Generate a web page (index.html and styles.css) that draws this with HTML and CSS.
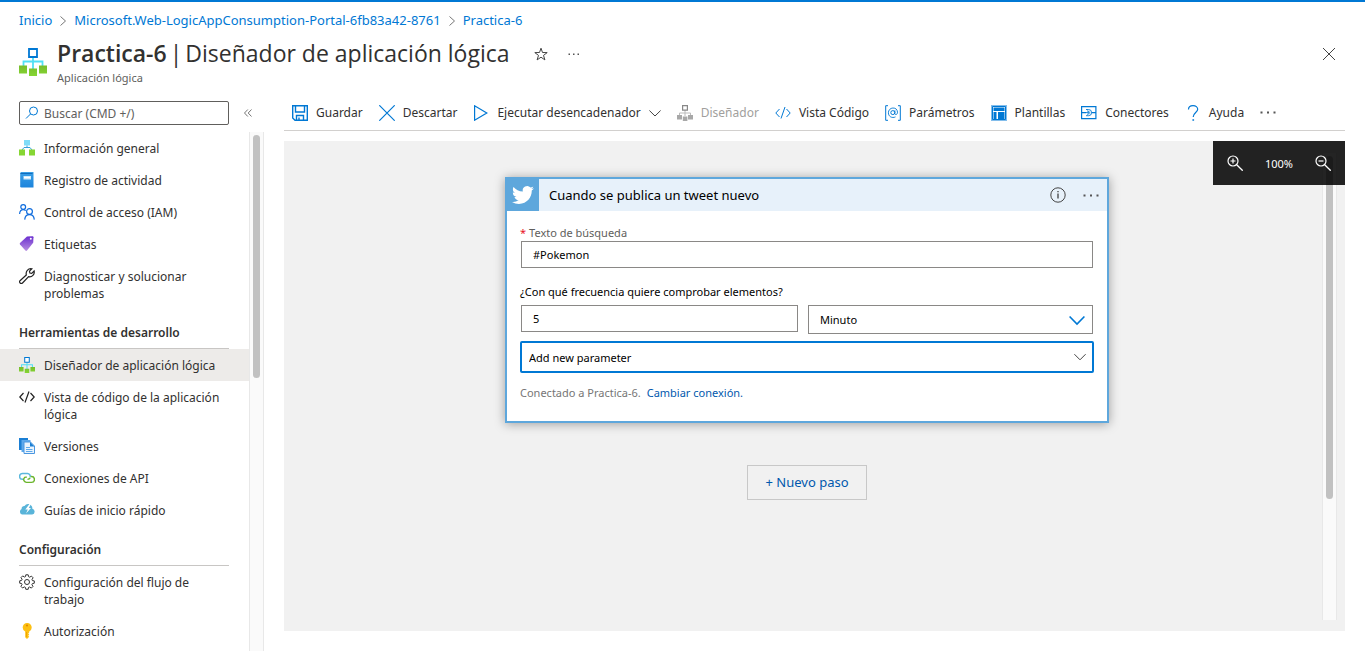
FILE: index.html
```html
<!DOCTYPE html>
<html lang="es">
<head>
<meta charset="utf-8">
<meta name="viewport" content="width=device-width, initial-scale=1">
<title>Practica-6 | Diseñador de aplicación lógica</title>
<link rel="stylesheet" href="styles.css">
</head>
<body>
<svg class="defs" aria-hidden="true">
  <defs>
    <linearGradient id="green" x1="0" y1="0" x2="0" y2="1"><stop offset="0" stop-color="#76bc2d"/><stop offset="1" stop-color="#86d633"/></linearGradient>
    <linearGradient id="blue" x1="0" y1="0" x2="0" y2="1"><stop offset="0" stop-color="#3a9fe6"/><stop offset="1" stop-color="#1c84dc"/></linearGradient>
    <linearGradient id="purple" x1="0" y1="0" x2="0" y2="1"><stop offset="0" stop-color="#6b2fd0"/><stop offset="1" stop-color="#b78ee0"/></linearGradient>
    <symbol id="logic" viewBox="0 0 28 28">
      <path d="M14 9v14M4.500 19v-5.500h19V19" fill="none" stroke="#50e0f5" stroke-width="1.800"/>
      <path d="M10 1h8v8h-8z" fill="#fff" stroke="#0078d4" stroke-width="1.800"/>
      <path d="M0 17.500h8v8H0zM10 20.500h8v7.500h-8zM20 17.500h8v8h-8z" fill="url(#green)"/>
    </symbol>
    <symbol id="zoomer" viewBox="0 0 16 16">
      <circle cx="6" cy="6" r="5" fill="none" stroke="#fff" stroke-width="1.200"/>
      <path d="M9.700 9.700l6 6" stroke="#fff" stroke-width="1.300"/>
    </symbol>
  </defs>
</svg>

<header class="top">
  <nav class="crumbs" aria-label="Ruta">
    <a href="#">Inicio</a>
    <svg class="crumb-sep" viewBox="0 0 6 10"><path d="M.5.5L5.500 5 .5 9.500"/></svg>
    <a href="#">Microsoft.Web-LogicAppConsumption-Portal-6fb83a42-8761</a>
    <svg class="crumb-sep" viewBox="0 0 6 10"><path d="M.5.5L5.500 5 .5 9.500"/></svg>
    <a href="#">Practica-6</a>
  </nav>
  <div class="title-row">
    <svg class="title-icon"><use href="#logic"/></svg>
    <div class="title-text">
      <h1><strong>Practica-6</strong> <span>|</span> <span>Diseñador de aplicación lógica</span></h1>
      <p>Aplicación lógica</p>
    </div>
    <div class="title-actions">
      <button type="button" aria-label="Favorito"><svg class="i14" viewBox="0 0 14 14"><path class="ink" d="M7 1.200l1.500 4.300 4.700.1-3.700 2.800 1.400 4.500L7 10.200l-3.900 2.700 1.400-4.500L.8 5.600l4.700-.1z"/></svg></button>
      <button type="button" aria-label="Más"><svg class="i12" viewBox="0 0 12 12"><path d="M.5 5.500h1.500v1.500H.5zM5 5.500h1.500v1.500H5zM9.500 5.500H11v1.500H9.500z" fill="#555"/></svg></button>
    </div>
    <button class="close" type="button" aria-label="Cerrar"><svg class="i12" viewBox="0 0 12 12"><path class="ink" d="M0 0l12 12M12 0L0 12"/></svg></button>
  </div>
</header>

<div class="shell">
  <aside class="side">
    <div class="search-row">
      <label class="search">
        <svg class="i14" viewBox="0 0 14 14"><circle cx="8.500" cy="5" r="4" fill="none" stroke="#0078d4"/><path d="M5.500 8L1 12.500" stroke="#0078d4"/></svg>
        <input type="text" placeholder="Buscar (CMD +/)" aria-label="Buscar">
      </label>
      <button class="collapse" type="button" aria-label="Contraer"><svg viewBox="0 0 8 8"><path d="M3.800.5L.5 4l3.300 3.500M7.500.5L4.200 4l3.300 3.500" fill="none" stroke="#666" stroke-width=".9"/></svg></button>
    </div>
    <div class="side-body">
      <nav class="menu" aria-label="Menú de recursos">
        <a href="#"><svg class="mi" viewBox="0 0 16 16"><path d="M5 0h6v5.500H5z" fill="#7fdcf8"/><path d="M8 5.500v2M3 10l2-2.500h6l2 2.500" fill="none" stroke="#32a0dc"/><path d="M0 9.500h6V15.500H0zM10 9.500h6v6h-6z" fill="#86d633"/></svg>Información general</a>
        <a href="#"><svg class="mi" viewBox="0 0 16 16"><path d="M2 0h12.500v15.500H2.500a1.300 1.300 0 01-1.300-1.300V1z" fill="url(#blue)"/><path d="M1.500 1.500h12" stroke="#0f6cbd"/><path d="M4.500 4h7.500v3.500H4.500z" fill="#d3ecfc"/><path d="M5 5.500h6" stroke="#fff"/></svg>Registro de actividad</a>
        <a href="#"><svg class="mi" viewBox="0 0 16 16" fill="none" stroke="#0f6cdd" stroke-width="1.200"><circle cx="4.200" cy="3" r="2.400"/><path d="M.6 10C.8 7 2.300 5.700 4.200 5.700c1 0 1.800.3 2.500.9"/><circle cx="10.500" cy="7.500" r="2.900"/><path d="M5.700 15.600c.3-3 2.300-4.900 4.800-4.900s4.500 1.900 4.800 4.900"/></svg>Control de acceso (IAM)</a>
        <a href="#"><svg class="mi" viewBox="0 0 16 16"><path d="M8 .5l5.500-.3q1 0 1 1l-.3 5.500L8 14.500q-.8.800-1.600 0L1 8.500q-.6-.8 0-1.600z" fill="url(#purple)"/><circle cx="11.800" cy="2.800" r="1" fill="#fff"/></svg>Etiquetas</a>
        <a href="#"><svg class="mi" viewBox="0 0 16 16"><path d="M1 12.700L7.300 7C6.500 3.500 9 .2 12.800.8L10.500 3.200l.4 1.900 1.800.3 2.400-2.400c.8 3.500-2.100 6.400-5.500 5.700L3.500 15c-.8.800-1.700.7-2.400 0s-.8-1.600-.1-2.300z" fill="none" stroke="#222" stroke-width="1.200"/></svg>Diagnosticar y solucionar problemas</a>
        <h2>Herramientas de desarrollo</h2>
        <a href="#" class="current" aria-current="page"><svg class="mi"><use href="#logic"/></svg>Diseñador de aplicación lógica</a>
        <a href="#"><svg class="mi" viewBox="0 0 16 16"><path d="M4.500 4L.8 8l3.700 4M11.500 4l3.700 4-3.700 4M10 2.500L6 13.500" fill="none" stroke="#222" stroke-width="1.200"/></svg>Vista de código de la aplicación lógica</a>
        <a href="#"><svg class="mi" viewBox="0 0 16 16"><path d="M0 0h9v12H0z" fill="#1b7fd4"/><path d="M2.500 2h9v12h-9z" fill="#5ea9ec"/><path d="M5 4h6.500l4 4v7.500H5z" fill="#eaf4fd" stroke="#4a96e0"/><path d="M11 4v4.500h4.500z" fill="#1b7fd4"/><path d="M7 9.500h4M7 11.500h6.500M7 13.500h6.500" stroke="#5ea9ec"/></svg>Versiones</a>
        <a href="#"><svg class="mi" viewBox="0 0 16 16" fill="none" stroke-width="1.400"><path d="M4 9.300H3.500a2.900 2.900 0 010-5.800h5a2.900 2.900 0 012.600 3.800" stroke="#5bb8dc"/><path d="M11.800 6.500h.7a2.900 2.900 0 010 5.900h-5a2.900 2.900 0 01-2.400-4.300Q5.700 6.800 7.800 7.200" stroke="#6bb52c"/><path d="M11.100 7.800q-.5 1.500-2.600 1.600" stroke="#6bb52c"/></svg>Conexiones de API</a>
        <a href="#"><svg class="mi" viewBox="0 0 16 16"><path d="M3 12.500a3 3 0 01-.4-5.500A2.700 2.700 0 015.500 4 4.300 4.300 0 0113 4.500c.4 1 .4 1.600.3 2.300A2.900 2.900 0 0113.200 12.500z" fill="#59b4d9"/><path d="M10.500 2L6.300 7.500h2.500L7 11.500l5-5.500H9.800L12 2z" fill="#fff"/></svg>Guías de inicio rápido</a>
        <h2>Configuración</h2>
        <a href="#"><svg class="mi" viewBox="0 0 16 16" fill="none" stroke="#333"><circle cx="8" cy="8" r="2.500"/><path d="M6.800.8h2.400l.4 1.900 1.100.5 1.700-1.100 1.700 1.700L13 5.500l.4 1.100 1.900.3v2.300l-1.900.4-.5 1.100 1.100 1.700-1.700 1.700-1.700-1.100-1.100.4-.3 1.900H6.800l-.4-1.900-1.100-.5-1.700 1.100-1.700-1.700L3 10.600l-.4-1.100-1.900-.3V6.800l1.900-.4.5-1.100L2 3.600l1.700-1.700L5.400 3l1.100-.4z"/></svg>Configuración del flujo de trabajo</a>
        <a href="#"><svg class="mi" viewBox="0 0 16 16"><path d="M8 0a4.500 4.500 0 012.200 8.500v1l-1 1 1 1-1 1.200 1 1L8 16l-1.800-1.800V8.500A4.500 4.500 0 018 0z" fill="#fdc013"/><circle cx="8" cy="2.500" r="1.100" fill="#e08a00"/><path d="M7.500 9V14" stroke="#f0a500"/></svg>Autorización</a>
      </nav>
      <div class="track"><div class="thumb"></div></div>
    </div>
  </aside>

  <main class="main">
    <div class="toolbar" role="toolbar" aria-label="Comandos">
      <button type="button"><svg class="mi" viewBox="0 0 16 16" fill="none" stroke="#0078d4" stroke-width="1.400"><path d="M.7.7h14.600v14.600H3L.7 13z"/><path d="M3.500 1v6h9V1M4.500 15v-4.500h7V15M7 15v-2.500"/></svg>Guardar</button>
      <button type="button"><svg class="mi" viewBox="0 0 16 16"><path d="M.3.3l15.400 15.400M15.700.3L.3 15.700" stroke="#0078d4" stroke-width="1.200"/></svg>Descartar</button>
      <button type="button"><svg class="mi" viewBox="0 0 16 16"><path d="M1.600.8v14.400L13.800 8z" fill="none" stroke="#0078d4" stroke-width="1.200"/></svg>Ejecutar desencadenador<svg class="chev" viewBox="0 0 12 12"><path class="ink" d="M.4 3.500L6 9l5.600-5.500"/></svg></button>
      <button type="button" disabled><svg class="mi" viewBox="0 0 16 16"><path d="M8 5v6M2.500 10V8h11v2" fill="none" stroke="#bbb"/><path d="M5.600.6h4.800v4.600H5.600z" fill="#fff" stroke="#888" stroke-width="1.200"/><path d="M0 10h5v4.500H0zM5.800 11.500h4.600V16H5.800zM11 10h5v4.500h-5z" fill="#a8a8a8"/></svg>Diseñador</button>
      <button type="button"><svg class="mi" viewBox="0 0 16 16"><path d="M4.500 4L.8 8l3.700 4M11.500 4l3.700 4-3.700 4M10 2L6 13.500" fill="none" stroke="#0078d4"/></svg>Vista Código</button>
      <button type="button"><svg class="mi" viewBox="0 0 16 16" fill="none" stroke="#0078d4"><path d="M3 .7H.7v14.600H3M13 .7h2.300v14.600H13"/><circle cx="7.800" cy="7.600" r="2"/><path d="M9.900 5.300v3.600c.5 1.300 2.600.8 2.600-1.700A4.600 4.600 0 007.900 3a4.700 4.700 0 00-4.500 4.800c0 3.700 3.600 5.700 7.100 4.100" stroke-width=".9"/></svg>Parámetros</button>
      <button type="button"><svg class="mi" viewBox="0 0 16 16"><path d="M0 0h16v16H0z" fill="#83bdeb"/><path d="M1.500 1.500h13v13h-13z" fill="#fff" stroke="#0078d4"/><path d="M2.500 2.500h11V6h-11zM2.500 7h3v7h-3zM7 7h6.500v7H7z" fill="#0078d4"/></svg>Plantillas</button>
      <button type="button"><svg class="mi" viewBox="0 0 16 16" fill="none" stroke="#0078d4" stroke-width="1.200"><path d="M.6 1.600h14.300v12H.6zM0 7.600h5M10.500 7.600H15"/><path d="M5 4.500h2.500a3.100 3.100 0 010 6.200H5M5 7.600h3M6 5.900q2.700.2 2.700 1.700T6 9.300" stroke-width=".9"/></svg>Conectores</button>
      <button type="button"><svg class="mi" viewBox="0 0 16 16" fill="none" stroke="#0078d4" stroke-width="1.200"><path d="M3.500 4.500C3.500 2 5.200.6 8 .6s4.700 1.500 4.700 3.700C12.700 7.500 8.200 7.700 8.200 12"/><path d="M7.400 15h1.700" stroke-width="1.500"/></svg>Ayuda</button>
      <button type="button" aria-label="Más comandos"><svg class="mi" viewBox="0 0 16 16"><path d="M.5 6.500h2v2h-2zM7 6.500h2v2H7zM13.500 6.500h2v2h-2z" fill="#555"/></svg></button>
    </div>

    <section class="canvas">
      <article class="card">
        <header class="card-head">
          <span class="brand"><svg viewBox="0 0 24 24"><path fill="#fff" d="M23.953 4.570a10 10 0 01-2.825.775 4.958 4.958 0 002.163-2.723c-.951.555-2.005.959-3.127 1.184a4.920 4.920 0 00-8.384 4.482C7.690 8.095 4.067 6.130 1.640 3.162a4.822 4.822 0 00-.666 2.475c0 1.710.87 3.213 2.188 4.096a4.904 4.904 0 01-2.228-.616v.06a4.923 4.923 0 003.946 4.827 4.996 4.996 0 01-2.212.085 4.936 4.936 0 004.604 3.417 9.867 9.867 0 01-6.102 2.105c-.39 0-.779-.023-1.170-.067a13.995 13.995 0 007.557 2.209c9.053 0 13.998-7.496 13.998-13.985 0-.21 0-.42-.015-.63A9.935 9.935 0 0024 4.590z"/></svg></span>
          <h2>Cuando se publica un tweet nuevo</h2>
          <button type="button" aria-label="Información"><svg class="mi" viewBox="0 0 16 16"><circle class="ink" cx="8" cy="8" r="7.200"/><path d="M8 6.500V11.500M8 4v1.300" stroke="#333" stroke-width="1.200"/></svg></button>
          <button type="button" aria-label="Más"><svg class="mi" viewBox="0 0 16 16"><path d="M.5 7.500h2v2h-2zM7 7.500h2v2H7zM13.500 7.500h2v2h-2z" fill="#555"/></svg></button>
        </header>
        <form class="card-body">
          <label class="field-label" for="q"><span class="req">*</span>Texto de búsqueda</label>
          <input class="box query" id="q" type="text" value="#Pokemon">
          <label class="field-label freq" for="n">¿Con qué frecuencia quiere comprobar elementos?</label>
          <div class="pair">
            <input class="box" id="n" type="text" value="5">
            <div class="pick unit">
              <select aria-label="Unidad"><option>Minuto</option></select>
              <svg class="mi" viewBox="0 0 16 16"><path d="M.6 4.500L8 12l7.400-7.500" fill="none" stroke="#0078d4" stroke-width="1.600"/></svg>
            </div>
          </div>
          <div class="pick param">
            <select aria-label="Parámetro"><option>Add new parameter</option></select>
            <svg class="i12" viewBox="0 0 12 12"><path class="ink" d="M.4 3.200L6 8.800l5.600-5.600"/></svg>
          </div>
          <p class="conn">Conectado a Practica-6. <a href="#">Cambiar conexión.</a></p>
        </form>
      </article>
      <button class="new-step" type="button">+ Nuevo paso</button>
      <div class="track canvas-track"><div class="thumb"></div></div>
      <div class="zoom">
        <button type="button" aria-label="Acercar"><svg class="mi" viewBox="0 0 16 16"><use href="#zoomer"/><path d="M3.500 6h5M6 3.500v5" stroke="#fff" stroke-width="1.200"/></svg></button>
        <span>100%</span>
        <button type="button" aria-label="Alejar"><svg class="mi" viewBox="0 0 16 16"><use href="#zoomer"/><path d="M3.500 6h5" stroke="#fff" stroke-width="1.200"/></svg></button>
      </div>
    </section>
  </main>
</div>
</body>
</html>
```
FILE: styles.css
```css
* { box-sizing: border-box; }

body {
  margin: 0;
  height: 100vh;
  display: flex;
  flex-direction: column;
  border-top: 2px solid #0078d4;
  background: #fff;
  color: #323130;
  font: 12px/17px "Noto Sans", "Open Sans", sans-serif;
  overflow: hidden;
}

h1, h2, p { margin: 0; }
a { color: #0078d4; text-decoration: none; }
button, input, select { font: inherit; color: inherit; }
button { padding: 0; border: 0; background: none; }
svg { display: block; flex: none; }
.defs { position: absolute; width: 0; height: 0; }
.mi { width: 16px; height: 16px; }
.i14 { width: 14px; height: 14px; }
.i12 { width: 12px; height: 12px; }
.ink { fill: none; stroke: #444; stroke-width: 1; }

/* Header */
.crumbs {
  display: flex;
  align-items: center;
  gap: 8px;
  padding: 10px 19px 0;
  font-size: 13px;
}
.crumb-sep { width: 6px; height: 10px; }
.crumb-sep path { fill: none; stroke: #777; }
.title-row {
  display: flex;
  align-items: center;
  gap: 10px;
  padding: 8px 30px 0 19px;
}
.title-icon { width: 28px; height: 28px; }
.title-text h1 {
  display: flex;
  gap: 3px;
  font-family: "Open Sans", "Noto Sans", sans-serif;
  font-size: 23px;
  line-height: 32px;
  font-weight: 400;
}
.title-text h1 strong { font-weight: 600; }
.title-text p { font-size: 11px; line-height: 18px; color: #605e5c; }
.title-actions {
  display: flex;
  gap: 20px;
  padding-left: 14px;
  margin-bottom: 16px;
}
.close { margin: 0 0 16px auto; }

/* Sidebar */
.shell { display: flex; flex: 1; min-height: 0; padding-top: 14px; }
.side { width: 264px; flex: none; display: flex; flex-direction: column; }
.search-row { display: flex; align-items: center; gap: 15px; padding-left: 19px; }
.search {
  display: flex;
  align-items: center;
  gap: 5px;
  width: 210px;
  height: 24px;
  padding: 0 5px;
  border: 1px solid #605e5c;
  border-radius: 2px;
}
.search input { flex: 1; min-width: 0; padding: 0; border: 0; outline: 0; background: none; }
.search input::placeholder { color: #605e5c; opacity: 1; }
.collapse svg { width: 8px; height: 8px; }
.side-body { display: flex; flex: 1; min-height: 0; margin-top: 7px; }
.menu { flex: 1; overflow-y: auto; scrollbar-width: none; }
.menu a {
  display: flex;
  gap: 9px;
  padding: 8px 19px 7px;
  color: #323130;
}
.menu h2 {
  margin: 0 20px 0 19px;
  padding: 15px 0 7px;
  border-bottom: 1px solid #c8c6c4;
  font-size: 12px;
  line-height: 17px;
  font-weight: 600;
}
.menu .current { background: #edebe9; }
.track {
  width: 15px;
  padding: 3px 3px 0;
  background: #fafafa;
  border: solid #e8e8e8;
  border-width: 0 1px;
}
.thumb { height: 47%; border-radius: 4px; background: #c1c1c1; }

/* Toolbar */
.main { flex: 1; min-width: 0; display: flex; flex-direction: column; padding: 0 20px; }
.toolbar {
  display: flex;
  gap: 16px;
  padding: 3px 8px 9px;
  border-bottom: 1px solid #d2d0ce;
  white-space: nowrap;
}
.toolbar button { display: flex; align-items: center; gap: 8px; }
.toolbar button:disabled { color: #a19f9d; }
.chev { width: 12px; height: 12px; }

/* Canvas */
.canvas {
  position: relative;
  flex: 1;
  display: flex;
  flex-direction: column;
  align-items: center;
  gap: 42px;
  margin: 10px 0 20px;
  padding: 36px 15px 0 0;
  background: #f1f1f1;
}
.card {
  width: 604px;
  max-width: 100%;
  border: 2px solid #5ea7dc;
  background: #fff;
  box-shadow: 0 1px 10px rgba(0, 0, 0, .35);
  color: #000;
}
.card-head {
  display: flex;
  align-items: center;
  gap: 17px;
  height: 32px;
  padding-right: 8px;
  background: #e7f1fa;
}
.brand {
  display: grid;
  place-items: center;
  align-self: stretch;
  width: 32px;
  margin-right: -7px;
  background: #5ea7dc;
}
.brand svg { width: 22px; height: 22px; }
.card-head h2 { flex: 1; font-size: 13px; font-weight: 400; }
.card-body {
  display: flex;
  flex-direction: column;
  padding: 13px 13px 20px;
  font-size: 11px;
}
.field-label { color: #605e5c; }
.field-label.freq { margin: 15px 0 5px; color: #000; }
.req { margin-right: 3px; color: #e81123; }
.box {
  height: 27px;
  min-width: 0;
  padding: 0 11px;
  border: 1px solid #8a8886;
  background: #fff;
}
.query { margin: 0 1px; }
.pair { display: grid; grid-template-columns: 277fr 285fr; gap: 10px; margin: 0 1px; }
.pick { display: grid; align-items: center; }
.pick > * { grid-area: 1 / 1; }
.pick select {
  width: 100%;
  appearance: none;
  border: 1px solid #8a8886;
  border-radius: 0;
  background: #fff;
}
.pick svg { justify-self: end; margin-right: 8px; pointer-events: none; }
.unit select { height: 29px; padding: 0 11px; }
.param { margin-top: 7px; }
.param select { height: 32px; padding: 0 7px; border: 2px solid #0078d4; border-radius: 2px; }
.conn { margin-top: 11px; color: #767676; }
.conn a { margin-left: 3px; color: #0058ad; }
.new-step {
  height: 35px;
  padding: 0 17px;
  border: 1px solid #c8c8c8;
  font-size: 13px;
  color: #0058ad;
}
.canvas-track { position: absolute; top: 12px; right: 8px; bottom: 11px; }
.canvas-track .thumb { height: 74%; }
.zoom {
  position: absolute;
  top: 0;
  right: 0;
  display: flex;
  align-items: center;
  justify-content: space-between;
  width: 132px;
  height: 44px;
  padding: 0 14px;
  background: rgba(0, 0, 0, .86);
  color: #fff;
  font-size: 11px;
}
```
